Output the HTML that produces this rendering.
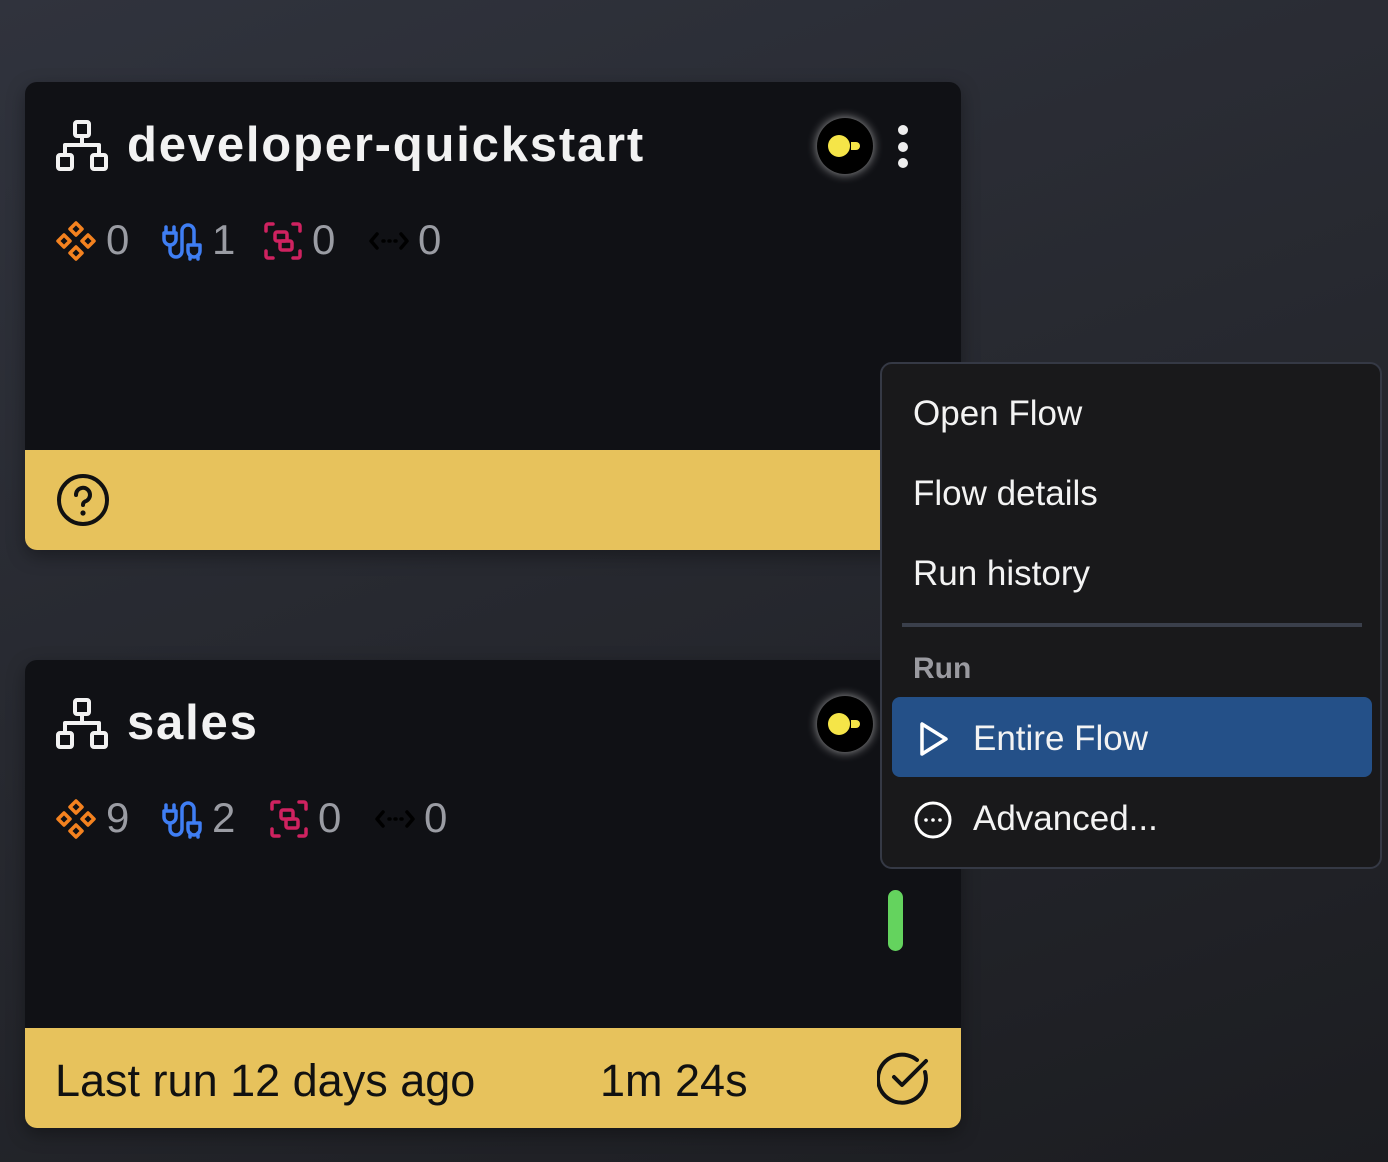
<!DOCTYPE html>
<html><head><meta charset="utf-8"><style>
*{margin:0;padding:0;box-sizing:border-box}
body{width:1388px;height:1162px;overflow:hidden;background:linear-gradient(160deg,#30333d 0%,#272930 45%,#1c1d21 100%);font-family:"Liberation Sans",sans-serif;position:relative}
.card{position:absolute;left:25px;width:936px;height:468px;background:#101115;border-radius:12px;overflow:hidden;box-shadow:0 6px 18px rgba(0,0,0,.35)}
.foot{position:absolute;left:0;bottom:0;width:100%;height:100px;background:#e7c25c}
.title{position:absolute;left:102px;top:35px;font-size:49px;font-weight:bold;color:#f2f2f2;letter-spacing:1.8px}
.num{position:absolute;font-size:42px;color:#9a9ca3;top:134px}
.abs{position:absolute}
.menu{position:absolute;left:880px;top:362px;width:502px;height:507px;background:#19191b;border:2px solid #353945;border-radius:12px}
.mi{position:absolute;left:31px;font-size:35px;color:#f3f3f3}
.dot{position:absolute;left:873px;width:10px;height:10px;border-radius:50%;background:#eee}
</style></head><body>
<svg width="0" height="0" style="position:absolute">
<defs>
<symbol id="flow" viewBox="0 0 52 52"><g fill="none" stroke="#f2f2f2" stroke-width="4" stroke-linejoin="round"><rect x="19" y="2" width="14" height="14" rx="2"/><rect x="2" y="35" width="14" height="14" rx="2"/><rect x="36" y="35" width="14" height="14" rx="2"/><path d="M26 16v9M9 35v-10h34v10"/></g></symbol>
<symbol id="ora" viewBox="0 0 40 40"><g fill="none" stroke="#f4821f" stroke-width="3.5" stroke-linejoin="round"><path d="M20 2l6 6-6 6-6-6z"/><path d="M20 26l6 6-6 6-6-6z"/><path d="M8 14l6 6-6 6-6-6z"/><path d="M32 14l6 6-6 6-6-6z"/></g></symbol>
<symbol id="blu" viewBox="0 0 40 40"><g fill="none" stroke="#3f7ef3" stroke-width="3.5" stroke-linecap="round" stroke-linejoin="round"><path d="M4 6v6M12 6v6M2 12h12v6a6 6 0 0 1-12 0zM8 24v6a6 6 0 0 0 12 0V10a6 6 0 0 1 12 0v14M28 34v4M36 34v4M26 24h12v6a6 6 0 0 1-12 0z"/></g></symbol>
<symbol id="pnk" viewBox="0 0 40 40"><g fill="none" stroke="#cf2260" stroke-width="3.5" stroke-linecap="round" stroke-linejoin="round"><path d="M3 10V5a2 2 0 0 1 2-2h5M30 3h5a2 2 0 0 1 2 2v5M37 30v5a2 2 0 0 1-2 2h-5M10 37H5a2 2 0 0 1-2-2v-5"/><rect x="12" y="11" width="12" height="9" rx="2"/><rect x="17" y="20" width="12" height="9" rx="2"/></g></symbol>
<symbol id="arr" viewBox="0 0 40 40"><g fill="none" stroke="#000" stroke-width="3.5" stroke-linecap="round" stroke-linejoin="round"><path d="M8 13l-6 7 6 7M32 13l6 7-6 7"/><path d="M14 20h1M20 20h1M26 20h1"/></g></symbol>
<symbol id="cam" viewBox="0 0 60 60"><circle cx="30" cy="30" r="28" fill="#000"/><circle cx="24" cy="30" r="11" fill="#f5e548"/><path d="M36 26h5a4 4 0 0 1 0 8h-5z" fill="#f5e548"/></symbol>
</defs></svg>

<div class="card" style="top:82px">
  <svg class="abs" style="left:31px;top:38px" width="52" height="52"><use href="#flow"/></svg>
  <div class="title">developer-quickstart</div>
  <svg class="abs" style="left:790px;top:34px;filter:drop-shadow(0 0 5px rgba(255,255,255,.6))" width="60" height="60"><use href="#cam"/></svg>
  <div class="dot" style="top:43px"></div>
  <div class="dot" style="top:60px"></div>
  <div class="dot" style="top:76px"></div>
  <svg class="abs" style="left:31px;top:139px" width="40" height="40"><use href="#ora"/></svg><div class="num" style="left:81px">0</div>
  <svg class="abs" style="left:137px;top:139px" width="40" height="40"><use href="#blu"/></svg><div class="num" style="left:187px">1</div>
  <svg class="abs" style="left:238px;top:139px" width="40" height="40"><use href="#pnk"/></svg><div class="num" style="left:287px">0</div>
  <svg class="abs" style="left:344px;top:139px" width="40" height="40"><use href="#arr"/></svg><div class="num" style="left:393px">0</div>
  <div class="foot">
    <svg class="abs" style="left:31px;top:23px" width="54" height="54" viewBox="0 0 54 54"><g fill="none" stroke="#111" stroke-width="4" stroke-linecap="round"><circle cx="27" cy="27" r="24"/><path d="M20 22a7 7 0 1 1 9 6.5c-1.5.8-2 1.8-2 3.5"/></g><circle cx="27" cy="40" r="2.6" fill="#111"/></svg>
  </div>
</div>

<div class="card" style="top:660px">
  <svg class="abs" style="left:31px;top:38px" width="52" height="52"><use href="#flow"/></svg>
  <div class="title">sales</div>
  <svg class="abs" style="left:790px;top:34px;filter:drop-shadow(0 0 5px rgba(255,255,255,.6))" width="60" height="60"><use href="#cam"/></svg>
  <svg class="abs" style="left:31px;top:139px" width="40" height="40"><use href="#ora"/></svg><div class="num" style="left:81px">9</div>
  <svg class="abs" style="left:137px;top:139px" width="40" height="40"><use href="#blu"/></svg><div class="num" style="left:187px">2</div>
  <svg class="abs" style="left:244px;top:139px" width="40" height="40"><use href="#pnk"/></svg><div class="num" style="left:293px">0</div>
  <svg class="abs" style="left:350px;top:139px" width="40" height="40"><use href="#arr"/></svg><div class="num" style="left:399px">0</div>
  <div class="abs" style="left:863px;top:230px;width:15px;height:61px;border-radius:8px;background:#64d35e"></div>
  <div class="foot">
    <div class="abs" style="left:30px;top:27px;font-size:45px;color:#111">Last run 12 days ago</div>
    <div class="abs" style="left:575px;top:27px;font-size:45px;color:#111">1m 24s</div>
    <svg class="abs" style="left:852px;top:23px" width="56" height="56" viewBox="0 0 56 56"><g fill="none" stroke="#111" stroke-width="4" stroke-linecap="round" stroke-linejoin="round"><path d="M48 21A24 24 0 1 1 40 9"/><path d="M17 26l8 8 24-24"/></g></svg>
  </div>
</div>

<div class="menu">
  <div class="mi" style="top:30px">Open Flow</div>
  <div class="mi" style="top:110px">Flow details</div>
  <div class="mi" style="top:190px">Run history</div>
  <div class="abs" style="left:20px;top:259px;width:460px;height:4px;background:#3a3f4b"></div>
  <div class="mi" style="top:288px;font-size:30px;color:#9a9aa0;font-weight:bold">Run</div>
  <div class="abs" style="left:10px;top:333px;width:480px;height:80px;background:#245088;border-radius:8px"></div>
  <svg class="abs" style="left:37px;top:357px" width="30" height="36" viewBox="0 0 30 36"><path d="M3 3v30l24-15z" fill="none" stroke="#fff" stroke-width="3.5" stroke-linejoin="round"/></svg>
  <div class="mi" style="left:91px;top:355px">Entire Flow</div>
  <svg class="abs" style="left:31px;top:436px" width="40" height="40" viewBox="0 0 40 40"><circle cx="20" cy="20" r="17" fill="none" stroke="#fff" stroke-width="3"/><circle cx="13" cy="20" r="1.8" fill="#fff"/><circle cx="20" cy="20" r="1.8" fill="#fff"/><circle cx="27" cy="20" r="1.8" fill="#fff"/></svg>
  <div class="mi" style="left:91px;top:435px">Advanced...</div>
</div>
</body></html>
